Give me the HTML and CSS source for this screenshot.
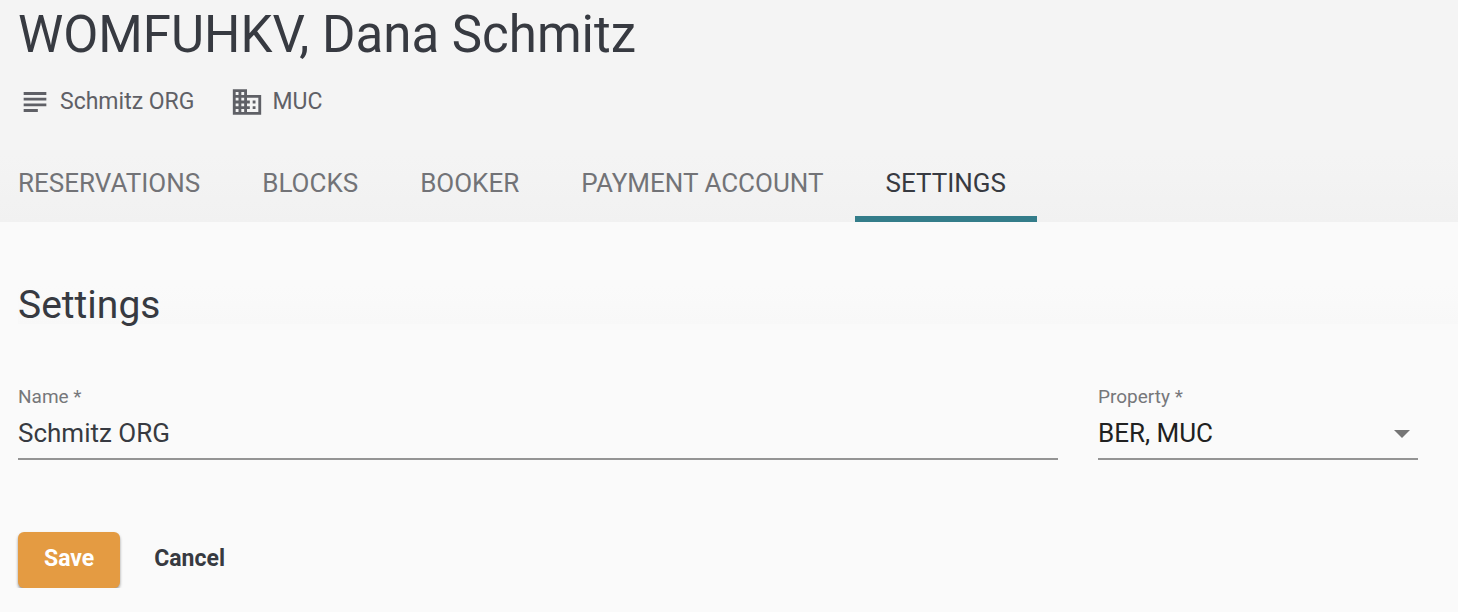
FILE: index.html
```html
<!DOCTYPE html>
<html lang="en">
<head>
    <meta charset="UTF-8">
    <meta name="viewport" content="width=device-width, initial-scale=1.0">
    <title>Settings</title>
    <link rel="stylesheet" href="styles.css">
</head>
<body>
    <header class="page-header">
        <h1>WOMFUHKV, Dana Schmitz</h1>
        <div class="meta">
            <span class="meta-item">
                <svg class="icon" viewBox="0 0 24 24" aria-hidden="true"><path d="M14 17H4v2h10v-2zm6-8H4v2h16V9zM4 15h16v-2H4v2zM4 5v2h16V5H4z"/></svg>
                Schmitz ORG
            </span>
            <span class="meta-item">
                <svg class="icon" viewBox="0 0 24 24" aria-hidden="true"><path d="M12 7V3H2v18h20V7H12zM6 19H4v-2h2v2zm0-4H4v-2h2v2zm0-4H4V9h2v2zm0-4H4V5h2v2zm4 12H8v-2h2v2zm0-4H8v-2h2v2zm0-4H8V9h2v2zm0-4H8V5h2v2zm10 12h-8v-2h2v-2h-2v-2h2v-2h-2V9h8v10zm-2-8h-2v2h2v-2zm0 4h-2v2h2v-2z"/></svg>
                MUC
            </span>
        </div>
        <nav class="tabs">
            <a href="#reservations">RESERVATIONS</a>
            <a href="#blocks">BLOCKS</a>
            <a href="#booker">BOOKER</a>
            <a href="#payment">PAYMENT ACCOUNT</a>
            <a href="#settings" class="active" aria-current="page">SETTINGS</a>
        </nav>
    </header>

    <main class="content">
        <h2>Settings</h2>
        <form>
            <div class="fields">
                <div class="field field-name">
                    <label for="name">Name *</label>
                    <input type="text" id="name" name="name" value="Schmitz ORG" required>
                </div>
                <div class="field field-property">
                    <label for="property">Property *</label>
                    <select id="property" name="property" required>
                        <option>BER, MUC</option>
                    </select>
                    <svg class="arrow" viewBox="0 0 16 8" aria-hidden="true"><path d="M0 0h16L8 8z"/></svg>
                </div>
            </div>
            <div class="actions">
                <button type="submit" class="save">Save</button>
                <button type="button" class="cancel">Cancel</button>
            </div>
        </form>
    </main>
</body>
</html>
```
FILE: styles.css
```css
* { box-sizing: border-box; }
body { margin: 0; font-family: Roboto, sans-serif; color: #373a41; background: #fafafa; }
h1, h2 { margin: 0; font-weight: 400; }

.page-header { background: linear-gradient(#f4f4f4 70%, #f1f1f1); }
h1 { padding: 3px 18px 0; font-size: 51px; line-height: 64px; }
.meta { display: flex; gap: 36px; padding: 15px 18px 0; }
.meta-item { display: flex; align-items: center; gap: 8px; font-size: 23px; line-height: 40px; color: #5f6066; }
.icon { width: 34px; height: 34px; fill: #5f6066; }

.tabs { display: flex; padding-top: 28px; }
.tabs a { padding: 0 31px; border-bottom: 6px solid transparent; font-size: 26px; line-height: 66px; color: #727377; text-decoration: none; }
.tabs a:first-child { padding-left: 18px; }
.tabs a.active { color: #373a41; border-color: #347d8a; }

.content { padding: 64px 40px 0 18px; }
h2 { font-size: 39px; line-height: 38px; background: linear-gradient(#fafafa, #f8f8f8); margin-right: -40px; }
.fields { display: flex; gap: 40px; padding-top: 61px; }
.field { position: relative; }
.field-name { flex: 1; }
.field-property { width: 320px; }
label { display: block; font-size: 19px; line-height: 24px; color: #76777a; }
input, select { display: block; width: 100%; height: 51px; padding: 0 0 2px; border: 0; border-bottom: 2px solid #949494; border-radius: 0; outline: none; background: transparent; font-family: inherit; font-size: 26px; color: #373a41; }
select { appearance: none; color: #212121; }
.arrow { position: absolute; right: 8px; bottom: 22px; width: 16px; height: 8px; fill: #757575; pointer-events: none; }

.actions { display: flex; gap: 8px; padding-top: 72px; }
button { height: 56px; padding: 0 26px 3px; border: 0; border-radius: 6px; background: transparent; font-family: inherit; font-size: 23px; font-weight: 700; color: #373a41; }
.save { background: #e49b42; color: #fff; box-shadow: 0 2px 3px rgba(0, 0, 0, 0.4); }
```
